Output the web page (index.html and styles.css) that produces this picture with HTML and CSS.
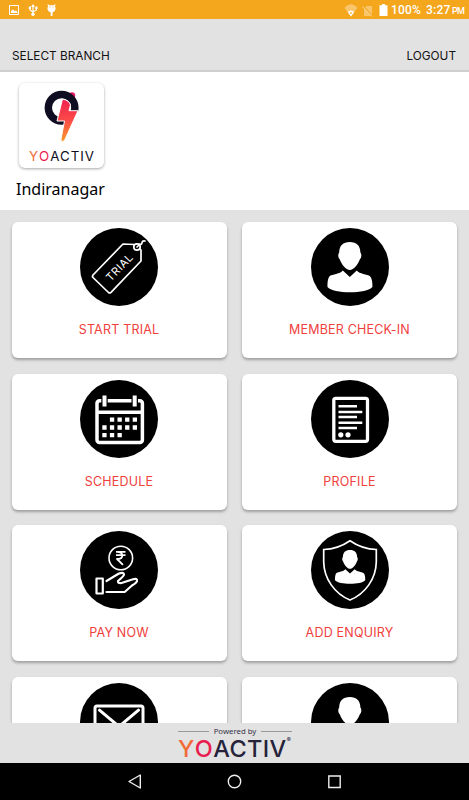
FILE: index.html
```
<!DOCTYPE html>
<html lang="en">
<head>
<meta charset="utf-8">
<title>Yoactiv</title>
<link rel="stylesheet" href="styles.css">
</head>
<body>
<svg width="0" height="0" class="defs">
  <defs>
    <g id="person">
      <path d="M38.800 14C32 14 28.400 17.500 28.200 24.500C26.800 26 27 29.500 28.600 31C30.500 36.500 35 42 38.800 42S47 36.500 49 31C50.600 29.500 50.800 26 49.400 24.500C49.200 17.500 45.600 14 38.800 14Z"/>
      <path d="M31.800 42.500L38.800 49L45.800 42.500C48.500 46.300 56 45.800 59.300 48.500C61 50.500 61.600 55 61.400 59C56 66 22 66 16.500 59C16.300 55 16.800 50.500 18.300 48.500C21.500 45.800 29 46.300 31.800 42.500Z"/>
    </g>
    <linearGradient id="bolt" x1="0" y1="0" x2="0" y2="1">
      <stop offset="0" stop-color="#f0204f"/><stop offset=".5" stop-color="#fb4b48"/><stop offset="1" stop-color="#fb9b2c"/>
    </linearGradient>
  </defs>
</svg>
<div class="screen">
  <div class="status">
    <svg class="status-left" width="60" height="19" viewBox="0 0 60 19" fill="#fff">
      <path fill="none" stroke="#fff" stroke-width="1" d="M9.500 5.500H18.500V14.500H9.500Z"/><path d="M11 13V11L13 9.500L14.500 11L16 10.500L17.500 12V13Z"/>
      <path d="M33 4L35 7H31ZM28.800 6.500H31V9H28.800ZM35.300 6.500H37.500V9H35.300Z"/><path fill="none" stroke="#fff" stroke-width="1.200" d="M33 6V14M30 8V10L33 12L36.400 10V8"/><circle cx="33" cy="14.300" r="1.700"/>
      <path d="M47.500 4L49.500 5.200H53.500L55.500 4L55 6.500C56.500 9 55 11.500 52.500 12.500V16H50.700V12.500C48 11.500 46.600 9 48 6.500Z"/><circle cx="50" cy="7" r=".5" fill="#f4a61d"/><circle cx="53" cy="7" r=".5" fill="#f4a61d"/>
    </svg>
    <div class="status-right">
      <svg width="46" height="19" viewBox="0 0 46 19">
        <path fill="#fff" fill-opacity=".35" d="M.5 7Q7-.5 13.500 7L7 15.500Z"/><path fill="#fff" d="M3.800 11Q7 8 10.200 11L7 15.500Z"/><path fill="#f4a61d" d="M6.400 11H7.600V13H6.400Z"/>
        <path fill="#fff" fill-opacity=".35" d="M21 6L23 5H28V15H20V8Z"/><path stroke="#f4a61d" stroke-width="1.600" d="M19 5L28.500 15.500"/><path stroke="#fff" stroke-opacity=".5" d="M18.500 5.500L28 15.500"/>
        <path fill="#fff" d="M35.500 4.200H38V3H41V4.200H43.500V15H35.500Z"/>
      </svg>
      <span class="battery">100%</span><span class="clock">3:27</span><span class="pm">PM</span>
    </div>
  </div>
  <header class="topbar"><span class="select">SELECT BRANCH</span><span class="logout">LOGOUT</span></header>
  <section class="branch">
    <div class="branch-logo">
      <svg width="85" height="56" viewBox="0 0 85 56">
        <circle cx="53" cy="12.500" r="3.200" fill="#e5195f"/>
        <circle cx="42.600" cy="24.800" r="13.300" fill="none" stroke="#0e0d22" stroke-width="7.400"/>
        <path fill="#fff" d="M46 44V36L56 28.500H62V45Z"/>
        <path d="M43.500 16Q50.500 17.500 51.500 22L50 27.700H59L45.500 57.500Q43 60 41.800 57L45.500 38H38Z" fill="url(#bolt)" stroke="#fff" stroke-width="1"/>
      </svg>
      <div class="brand small"><span class="y">Y</span><span class="o">O</span>ACTIV</div>
    </div>
    <div class="branch-name">Indiranagar</div>
  </section>
  <main class="grid">
    <div class="card">
      <svg class="icon" viewBox="0 0 78 78"><circle cx="39" cy="39" r="39"/>
        <g fill="none" stroke="#fff" stroke-width="1.700" stroke-linejoin="round" stroke-linecap="round"><path d="M54 16.500L43 16L13 47Q12 48.500 13 49.500L28.500 64.500Q29.700 65.500 31 64.300L61 33V22L59.500 20.500"/><circle cx="57" cy="19" r="3.200"/><path d="M57 19L58.500 17.500M59 16Q62 17 62 14.500Q62.500 12.500 65 13"/></g>
        <text class="tag-text" x="0" y="4.500" transform="translate(39 39) rotate(-46)" textLength="33">TRIAL</text>
      </svg>
      <span class="label">START TRIAL</span>
    </div>
    <div class="card">
      <svg class="icon" viewBox="0 0 78 78"><circle cx="39" cy="39" r="39"/><use href="#person" fill="#fff"/></svg>
      <span class="label">MEMBER CHECK-IN</span>
    </div>
    <div class="card">
      <svg class="icon" viewBox="0 0 78 78"><circle cx="39" cy="39" r="39"/>
        <rect x="17" y="20.800" width="45.400" height="41.600" rx="2.500" fill="none" stroke="#fff" stroke-width="3.500"/>
        <path d="M21.300 16V28H27.700V16ZM51.500 16V28H58V16Z"/>
        <path stroke="#fff" stroke-width="3.500" d="M17 32.300H62"/><path stroke="#fff" stroke-width="4" d="M24.500 15.500V26.500M54.700 15.500V26.500"/>
        <path stroke="#fff" stroke-width="4.300" stroke-dasharray="4.300 3.300" d="M29.900 39.700H57M22.300 47.500H57M22.300 55.200H42"/>
      </svg>
      <span class="label">SCHEDULE</span>
    </div>
    <div class="card">
      <svg class="icon" viewBox="0 0 78 78"><circle cx="39" cy="39" r="39"/>
        <rect x="22.800" y="18.300" width="33.700" height="43" rx="2" fill="none" stroke="#fff" stroke-width="3.300"/>
        <path stroke="#fff" stroke-width="2.500" d="M27.500 26.300H46M27.500 32H51.300M27.500 37H46M27.500 42.800H51.300M27.500 48H46"/><circle cx="29.800" cy="54.800" r="2.600" fill="#fff"/><circle cx="37" cy="54.800" r="2.600" fill="#fff"/>
      </svg>
      <span class="label">PROFILE</span>
    </div>
    <div class="card">
      <svg class="icon" viewBox="0 0 78 78"><circle cx="39" cy="39" r="39"/>
        <g fill="none" stroke="#fff" stroke-width="2.200" stroke-linecap="round" stroke-linejoin="round"><circle cx="40.800" cy="27" r="11.800" stroke-width="1.600"/><path stroke-width="1.800" stroke-linecap="butt" d="M36 20.800H45.500M36 24.200H45.500M37 20.800C44 20.800 44 28 37 28L43 33.800"/><rect x="16.500" y="47.500" width="6.300" height="15"/><path d="M26.500 50L38.500 42.800Q43.500 40.500 44 43.500Q44 45 38 50Q37.500 52.500 41.500 52L53 48.300Q57.500 47 57 50Q56.500 52 52 54.500L45.500 60.300Q44.500 61 43 61H26.500"/></g>
      </svg>
      <span class="label">PAY NOW</span>
    </div>
    <div class="card">
      <svg class="icon" viewBox="0 0 78 78"><circle cx="39" cy="39" r="39"/>
        <path fill="none" stroke="#fff" stroke-width="1.700" d="M39 9.700Q27 18 12.700 18.500V31C13 48 24 63 39 69C54 63 65 48 65.300 31V18.500Q51 18 39 9.700Z"/>
        <use href="#person" fill="#fff" transform="translate(12.900 9.600) scale(.673)"/>
      </svg>
      <span class="label">ADD ENQUIRY</span>
    </div>
    <div class="card">
      <svg class="icon" viewBox="0 0 78 78"><circle cx="39" cy="39" r="39"/><rect x="15" y="23" width="48" height="36" rx="2" fill="none" stroke="#fff" stroke-width="3"/><path fill="none" stroke="#fff" stroke-width="3" stroke-linecap="round" d="M19.500 27.200L39 43.500L58.500 27.200"/></svg>
    </div>
    <div class="card">
      <svg class="icon" viewBox="0 0 78 78"><circle cx="39" cy="39" r="39"/><use href="#person" fill="#fff"/></svg>
    </div>
  </main>
  <footer class="footer">
    <div class="powered"><i></i><span>Powered by</span><i></i></div>
    <div class="brand large"><span class="y">Y</span><span class="o">O</span>ACTIV<sup>®</sup></div>
  </footer>
  <nav class="nav">
    <svg width="469" height="37" viewBox="0 0 469 37" fill="none" stroke="#eee" stroke-width="1.400"><path stroke-linejoin="round" d="M129 18.500L140.300 12V25Z"/><circle cx="234.500" cy="18.500" r="6.200"/><path d="M328.800 13H340.200V24.500H328.800Z"/></svg>
  </nav>
</div>
</body>
</html>
```
FILE: styles.css
```
* { box-sizing: border-box; }
body { margin: 0; background: #000; font-family: Inter, sans-serif; color: #111; }
.defs { display: block; }
.screen { width: 469px; height: 800px; display: flex; flex-direction: column; overflow: hidden; background: #e2e2e2; }
.status { flex: none; height: 19px; background: #f4a61d; display: flex; justify-content: space-between; }
.status-right { display: flex; align-items: center; color: #fff; font: 500 12px/19px Roboto, sans-serif; padding: 1px 5px 0 0; white-space: nowrap; }
.battery { letter-spacing: .2px; margin-left: 1px; width: 35px; }
.clock { width: 26px; letter-spacing: .2px; }
.pm { font-size: 9px; padding-top: 2px; width: 12px; letter-spacing: -.7px; }
.topbar { flex: none; height: 53px; border-bottom: 2px solid #cfcfcf; display: flex; justify-content: space-between; padding: 28px 13px 0 12px; font-size: 11.800px; line-height: 18px; white-space: nowrap; }
.branch { flex: none; height: 138px; background: #fff; padding: 10.500px 17px 0 19px; }
.branch-logo { width: 85px; height: 85px; border-radius: 6px; box-shadow: 0 1px 3px rgba(0,0,0,.35); }
.branch-logo svg { display: block; overflow: visible; }
.branch-name { margin: 9px 0 0 -3px; font: 16px/24px "Noto Sans", sans-serif; color: #000; }
.brand { display: flex; }
.small { font-size: 13.300px; line-height: 18px; padding: 8.500px 0 0 10px; letter-spacing: 1px; color: #0e0d22; }
.small .y { color: #f16b36; }
.small .o { color: #e91e4f; }
.grid { flex: 1; min-height: 0; overflow: hidden; display: grid; grid-template-columns: 215px 215px; grid-auto-rows: 136px; gap: 15.500px; padding: 12px 12px 0 11.500px; align-content: start; }
.card { background: #fff; border-radius: 6px; box-shadow: 0 2px 3px rgba(0,0,0,.3); display: flex; flex-direction: column; align-items: center; padding-top: 6px; }
.icon { width: 78px; height: 78px; flex: none; }
.tag-text { fill: #fff; font: 11px Inter, sans-serif; text-anchor: middle; }
.label { color: #ef403c; font-size: 12.500px; line-height: 18px; margin-top: 15px; letter-spacing: .2px; white-space: nowrap; }
.footer { flex: none; height: 40px; padding: 3px 176px 0 178px; }
.powered { display: flex; align-items: center; justify-content: space-between; font: 7.800px/10px "Noto Sans", sans-serif; color: #35334a; padding-right: 1px; }
.powered i { width: 31px; height: 1px; background: #999; }
.large { font-size: 23.500px; line-height: 26px; font-weight: 500; color: #26233b; white-space: nowrap; letter-spacing: .4px; }
.large .y { color: #f26b38; }
.large .o { color: #ea1d50; }
.large sup { font-size: 6px; line-height: 7px; }
.nav { flex: none; height: 37px; background: #000; }
.nav svg { display: block; }
```
